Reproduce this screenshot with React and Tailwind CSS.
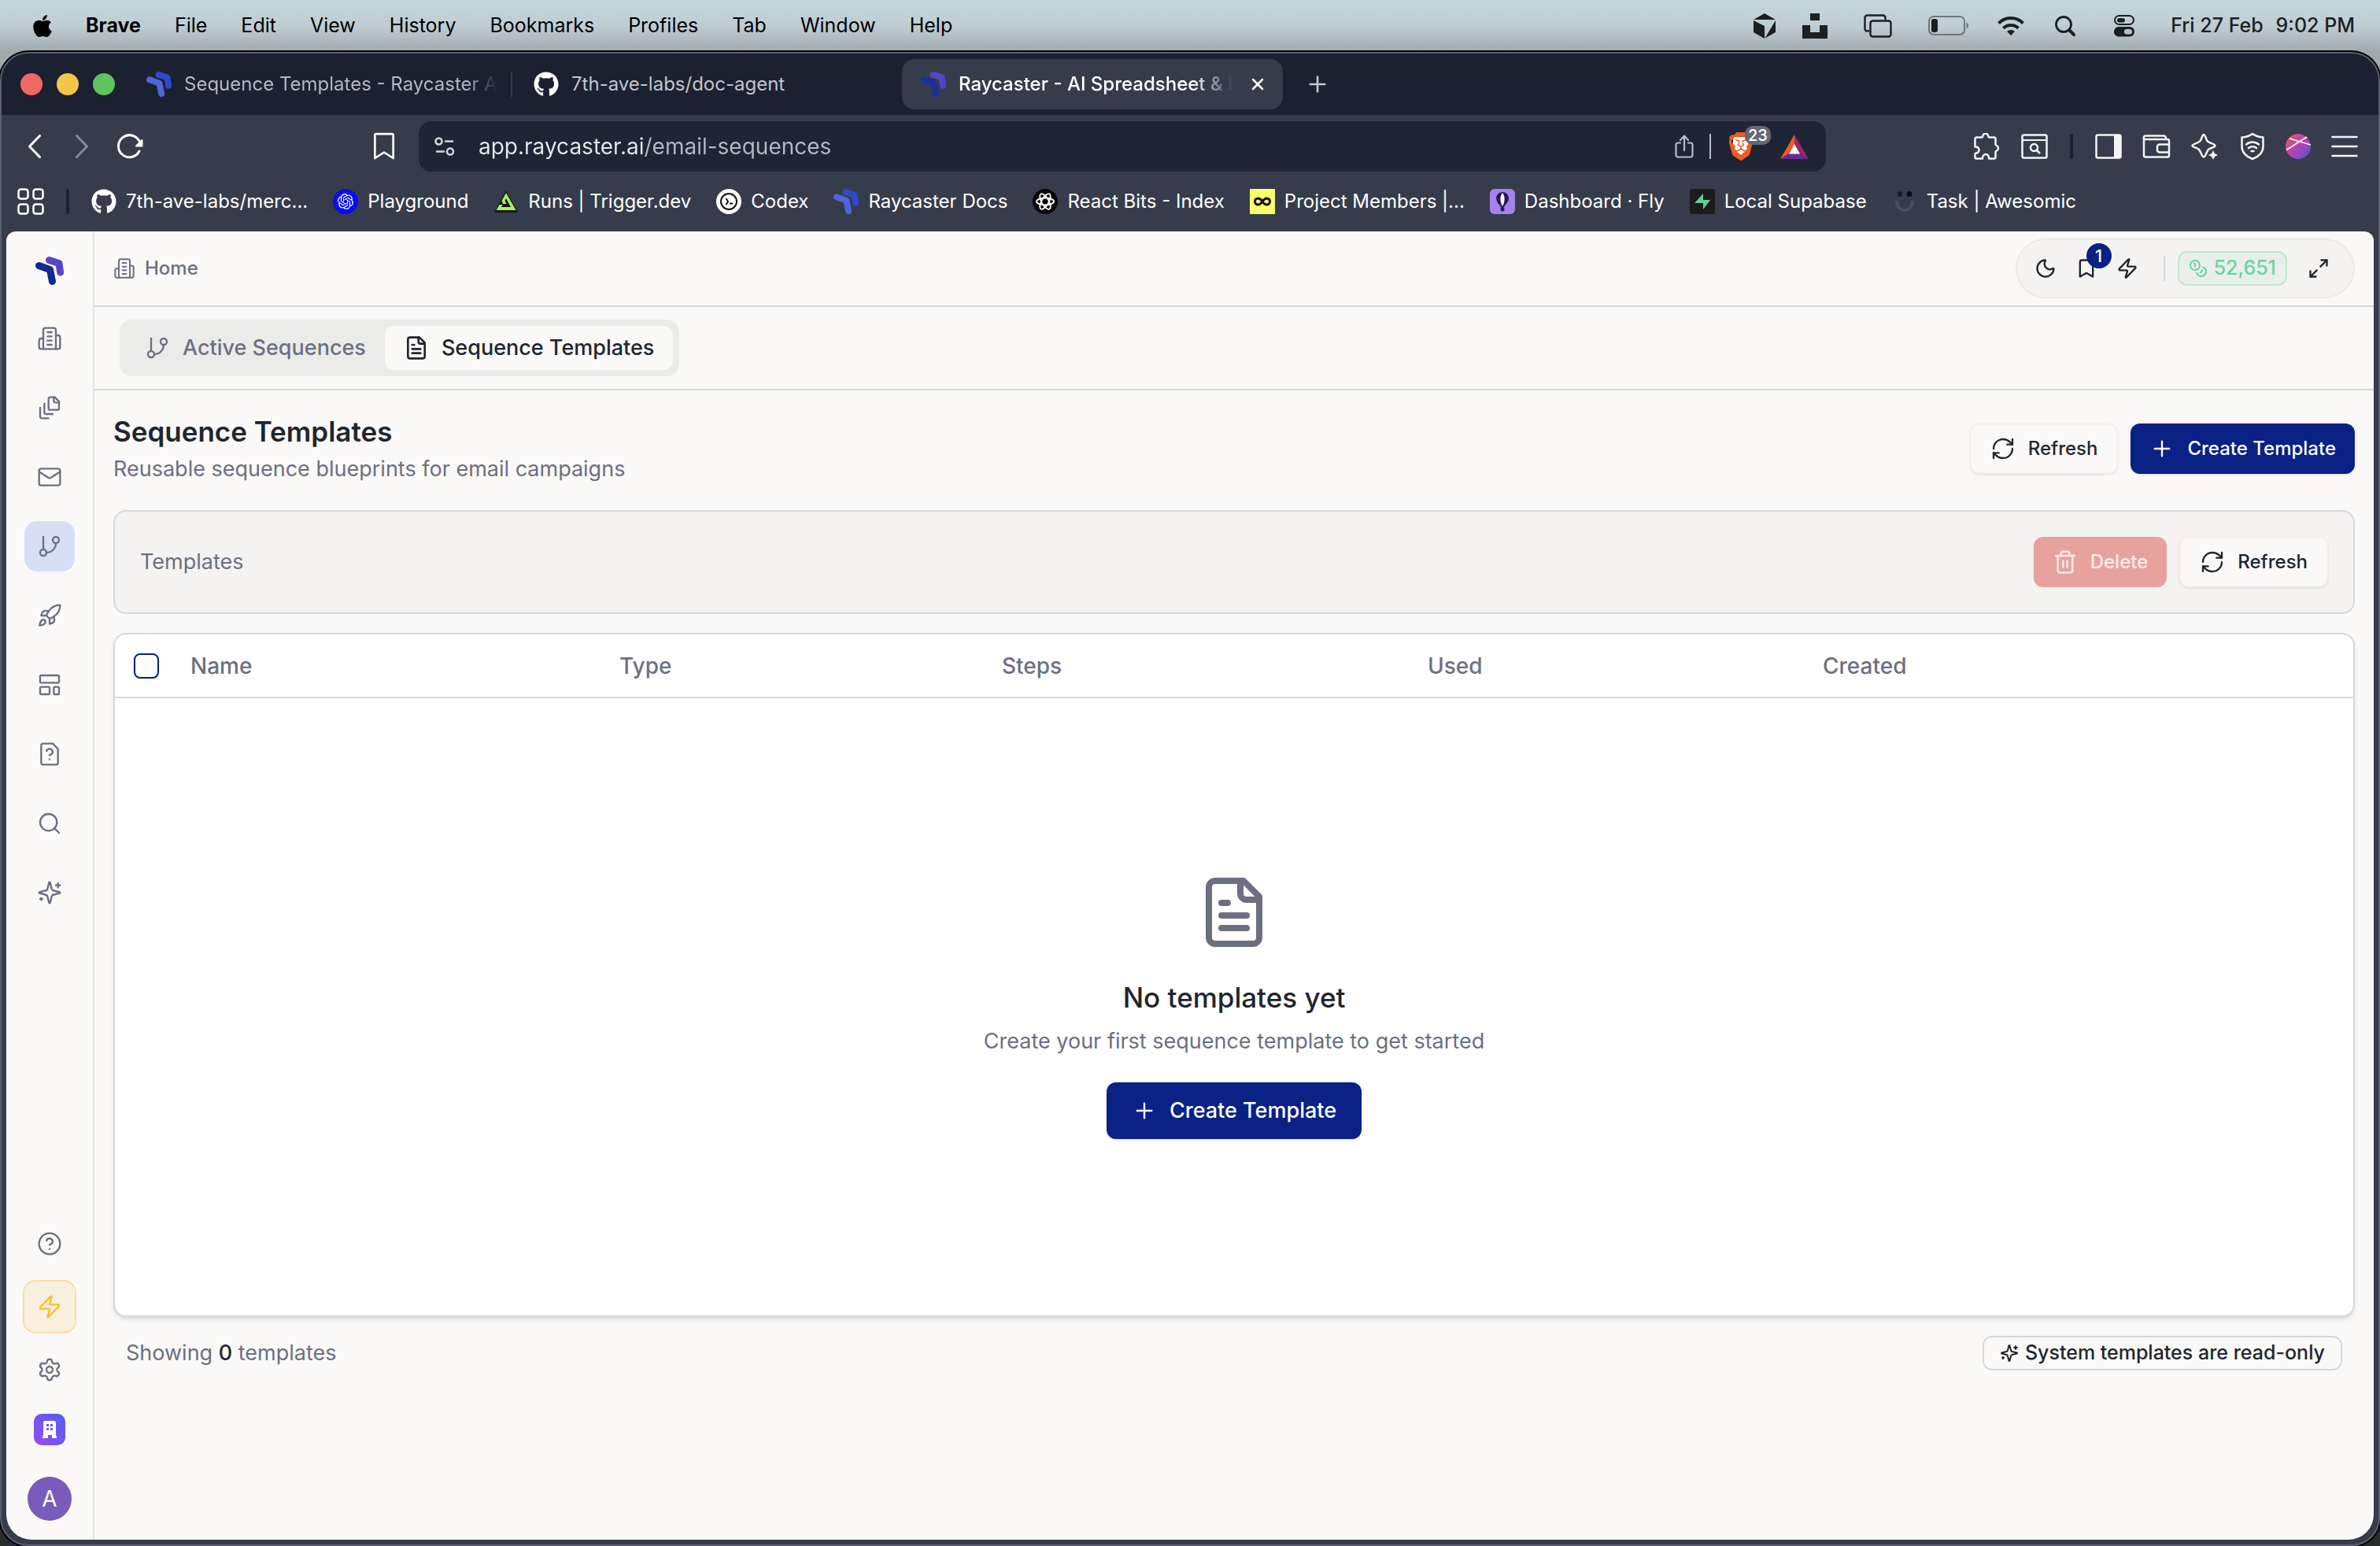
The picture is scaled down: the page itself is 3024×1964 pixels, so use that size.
import {
  Bookmark,
  Coins,
  LayoutTemplate,
  Maximize2,
  Moon,
  Plus,
  RefreshCw,
  Rocket,
  Search,
  Settings,
  Trash2,
  X,
  Zap,
} from "lucide-react";
import { FaApple, FaGithub } from "react-icons/fa";
import { SiBrave, SiOpenai } from "react-icons/si";

// 24x24 outline icon, same drawing rules as lucide
function Outline({ className, strokeWidth = 2, children }) {
  return (
    <svg
      viewBox="0 0 24 24"
      fill="none"
      stroke="currentColor"
      strokeWidth={strokeWidth}
      strokeLinecap="round"
      strokeLinejoin="round"
      className={className}
      aria-hidden="true"
    >
      {children}
    </svg>
  );
}

const BuildingIcon = (props) => (
  <Outline {...props}>
    <path d="M6 22V4a2 2 0 0 1 2-2h8a2 2 0 0 1 2 2v18Z" />
    <path d="M6 12H4a2 2 0 0 0-2 2v6a2 2 0 0 0 2 2h2" />
    <path d="M18 9h2a2 2 0 0 1 2 2v9a2 2 0 0 1-2 2h-2" />
    <path d="M10 6h4M10 10h4M10 14h4M10 18h4" />
  </Outline>
);

const FileStackIcon = (props) => (
  <Outline {...props}>
    <path d="M21 7h-3a2 2 0 0 1-2-2V2" />
    <path d="M21 6v6.5c0 .8-.7 1.5-1.5 1.5h-7c-.8 0-1.5-.7-1.5-1.5v-9c0-.8.7-1.5 1.5-1.5H17Z" />
    <path d="M7 8v8.8c0 .3.2.6.4.8.2.2.5.4.8.4H15" />
    <path d="M3 12v8.8c0 .3.2.6.4.8.2.2.5.4.8.4H11" />
  </Outline>
);

const MailIcon = (props) => (
  <Outline {...props}>
    <rect width="20" height="16" x="2" y="4" rx="2" />
    <path d="m22 7-8.97 5.7a1.94 1.94 0 0 1-2.06 0L2 7" />
  </Outline>
);

const BranchIcon = (props) => (
  <Outline {...props}>
    <path d="M6 3v12" />
    <circle cx="18" cy="6" r="3" />
    <circle cx="6" cy="18" r="3" />
    <path d="M18 9a9 9 0 0 1-9 9" />
  </Outline>
);

const FileQuestionIcon = (props) => (
  <Outline {...props}>
    <path d="M12 17h.01" />
    <path d="M15 2H6a2 2 0 0 0-2 2v16a2 2 0 0 0 2 2h12a2 2 0 0 0 2-2V7z" />
    <path d="M9.1 9a3 3 0 0 1 5.82 1c0 2-3 3-3 3" />
  </Outline>
);

const FileTextIcon = (props) => (
  <Outline {...props}>
    <path d="M15 2H6a2 2 0 0 0-2 2v16a2 2 0 0 0 2 2h12a2 2 0 0 0 2-2V7Z" />
    <path d="M14 2v4a2 2 0 0 0 2 2h4" />
    <path d="M10 9H8M16 13H8M16 17H8" />
  </Outline>
);

const SparklesIcon = (props) => (
  <Outline {...props}>
    <path d="M9.937 15.5A2 2 0 0 0 8.5 14.063l-6.135-1.582a.5.5 0 0 1 0-.962L8.5 9.936A2 2 0 0 0 9.937 8.5l1.582-6.135a.5.5 0 0 1 .963 0L14.063 8.5A2 2 0 0 0 15.5 9.937l6.135 1.581a.5.5 0 0 1 0 .964L15.5 14.063a2 2 0 0 0-1.437 1.437l-1.582 6.135a.5.5 0 0 1-.963 0z" />
    <path d="M20 3v4M22 5h-4M4 17v2M5 18H3" />
  </Outline>
);

const HelpIcon = (props) => (
  <Outline {...props}>
    <circle cx="12" cy="12" r="10" />
    <path d="M9.09 9a3 3 0 0 1 5.83 1c0 2-3 3-3 3M12 17h.01" />
  </Outline>
);

const logoTones = {
  page: { back: "#5446c8", gap: "#faf9f7", front: "#14298f" },
  tab: { back: "#5446c8", gap: "#363c4b", front: "#1a2f9c" },
  tabDim: { back: "#3048cc", gap: "#1b2130", front: "#4d66d8" },
  bar: { back: "#3048cc", gap: "#363c4b", front: "#4d66d8" },
};

function RaycasterLogo({ className, tone = "page" }) {
  const { back, gap, front } = logoTones[tone];
  return (
    <svg viewBox="0 0 36 36" fill="none" strokeWidth="9" strokeLinecap="round" strokeLinejoin="round" className={className} aria-hidden="true">
      <path d="M17.5 4.5 30 8.5l1.6 11.5" stroke={back} />
      <path d="m4.5 11.5 14 5 3 15" stroke={gap} strokeWidth="12" />
      <path d="m4.5 11.5 14 5 3 15" stroke={front} />
    </svg>
  );
}

/* ---------- macOS menu bar ---------- */

const menus = ["File", "Edit", "View", "History", "Bookmarks", "Profiles", "Tab", "Window", "Help"];

function MenuBar() {
  return (
    <header className="flex h-[66px] items-center justify-between bg-linear-to-b from-[#c6d5dc] via-[#bfcdd3] to-[#a0aaad] pr-8 pl-[42px] text-[25px] text-black">
      <div className="flex items-center gap-[43px]">
        <FaApple className="h-8 w-6" />
        <button className="font-bold">Brave</button>
        {menus.map((menu) => (
          <button key={menu}>{menu}</button>
        ))}
      </div>
      <div className="flex items-center gap-[46px] text-[#1c1f20]">
        <div className="flex items-center gap-[34px]">
          <svg viewBox="0 0 28 32" className="h-8 w-7" fill="currentColor" aria-hidden="true">
            <path d="M14 0 28 8H0Z" />
            <path d="M0 9l14 7v16L0 24Z" />
            <path d="M28 9v15L14.500 31.500Z" />
          </svg>
          <svg viewBox="0 0 32 32" className="size-8" fill="currentColor" aria-hidden="true">
            <path d="M10 0h12v9H10zM0 15h10v9h12v-9h10v17H0z" />
          </svg>
        </div>
        <svg viewBox="0 0 36 30" className="h-[30px] w-9" fill="none" stroke="currentColor" strokeWidth="2.400" aria-hidden="true">
          <path d="M7 21.500H4.500a3 3 0 0 1-3-3v-14a3 3 0 0 1 3-3h20a3 3 0 0 1 3 3V7" />
          <rect x="8.500" y="8.500" width="26" height="20" rx="3" />
        </svg>
        <div className="flex items-center gap-9">
          <svg viewBox="0 0 52 26" className="h-[26px] w-[52px]" aria-hidden="true">
            <rect x="1" y="1" width="45" height="23" rx="6" fill="none" stroke="#6d777b" strokeWidth="2" />
            <rect x="4" y="4" width="8" height="17" rx="3" fill="currentColor" />
            <path d="M48.500 8.500c3.500 1.500 3.500 6.500 0 8z" fill="#6d777b" />
          </svg>
          <svg viewBox="0 0 34 26" className="h-[26px] w-[34px]" fill="none" stroke="currentColor" strokeWidth="4" aria-hidden="true">
            <path d="M1.500 9.500a22 22 0 0 1 31 0M7.500 15.800a13.500 13.500 0 0 1 19 0" />
            <path d="m17 25-5-5a7 7 0 0 1 10 0z" fill="currentColor" stroke="none" />
          </svg>
          <svg viewBox="0 0 32 32" className="size-8" fill="none" stroke="currentColor" strokeLinecap="round" aria-hidden="true">
            <circle cx="14" cy="14" r="9.500" strokeWidth="2.800" />
            <path d="m21.500 21.500 5.500 5.500" strokeWidth="4" />
          </svg>
        </div>
        <svg viewBox="0 0 26 28" className="h-7 w-[26px]" aria-hidden="true">
          <rect x="1" y="1" width="24" height="11" rx="5.500" fill="none" stroke="currentColor" strokeWidth="2" />
          <rect x="4" y="4" width="10" height="5.500" rx="2.750" fill="currentColor" />
          <rect x="0" y="15" width="26" height="12.500" rx="6" fill="currentColor" />
          <rect x="13" y="18" width="10" height="6.500" rx="3.200" fill="#b5c2c7" />
        </svg>
        <span className="flex gap-4 font-medium">
          <span>Fri 27 Feb</span>
          <span>9:02 PM</span>
        </span>
      </div>
    </header>
  );
}

/* ---------- browser chrome ---------- */

function TabStrip() {
  return (
    <div className="flex h-[78px] items-center bg-[#1b2130] pl-6 text-[24px]">
      <div className="flex w-[136px] shrink-0 gap-[18px]">
        <button aria-label="Close window" className="size-7 rounded-full bg-[#ed6a62]" />
        <button aria-label="Minimise window" className="size-7 rounded-full bg-[#f5c646]" />
        <button aria-label="Zoom window" className="size-7 rounded-full bg-[#5fc361]" />
      </div>
      <div className="flex items-center gap-1">
        <div className="flex h-16 w-[484px] items-center gap-4 pr-5 pl-6 text-[#b5b8bf]">
          <RaycasterLogo tone="tabDim" className="size-8 shrink-0" />
          <span className="mask-r-from-90% whitespace-nowrap">Sequence Templates - Raycaster A</span>
        </div>
        <span className="-mx-px h-8 w-0.5 bg-[#363b49]" />
        <div className="flex h-16 w-[484px] items-center gap-4 px-6 text-[#c3c5ca]">
          <FaGithub className="size-8 shrink-0 text-white" />
          <span>7th-ave-labs/doc-agent</span>
        </div>
        <div className="ml-1 flex h-16 w-[484px] items-center gap-4 rounded-2xl bg-[#363c4b] pr-5 pl-6 text-white">
          <RaycasterLogo tone="tab" className="size-8 shrink-0" />
          <span className="mask-r-from-85% font-medium whitespace-nowrap">Raycaster - AI Spreadsheet &amp; I</span>
          <button aria-label="Close tab" className="ml-auto">
            <X className="size-6" strokeWidth={2.5} />
          </button>
        </div>
        <button aria-label="New tab" className="ml-6 text-[#c3c5ca]">
          <Plus className="size-8" strokeWidth={2} />
        </button>
      </div>
    </div>
  );
}

function Toolbar() {
  return (
    <div className="flex h-20 items-center bg-[#363c4b] pr-[26px] pl-[34px] text-white">
      <div className="flex w-[472px] shrink-0 items-center gap-9">
        <div className="flex items-center gap-11">
          <button aria-label="Back">
            <svg viewBox="0 0 16 30" className="h-[30px] w-4" fill="none" stroke="currentColor" strokeWidth="3" strokeLinecap="round" strokeLinejoin="round" aria-hidden="true">
              <path d="M14.500 1.500 1.500 15l13 13.500" />
            </svg>
          </button>
          <button aria-label="Forward" className="text-[#858a95]">
            <svg viewBox="0 0 16 30" className="h-[30px] w-4" fill="none" stroke="currentColor" strokeWidth="3" strokeLinecap="round" strokeLinejoin="round" aria-hidden="true">
              <path d="m1.500 1.500 13 13.500-13 13.500" />
            </svg>
          </button>
        </div>
        <button aria-label="Reload">
          <svg viewBox="0 0 34 32" className="h-8 w-[34px]" fill="none" stroke="currentColor" strokeWidth="3" strokeLinecap="round" aria-hidden="true">
            <path d="M30 12A14 14 0 1 0 29 22" />
            <path d="M32.500 8v7.500H25Z" fill="currentColor" strokeWidth="2" strokeLinejoin="round" />
          </svg>
        </button>
        <button aria-label="Bookmark this tab" className="ml-auto">
          <Outline className="size-10" strokeWidth={1.6}>
            <path d="M5 3.500a1 1 0 0 1 1-1h12a1 1 0 0 1 1 1V21l-7-4.500L5 21Z" />
          </Outline>
        </button>
      </div>
      <div className="ml-6 flex h-16 min-w-0 flex-1 items-center gap-6 rounded-2xl bg-[#202535] pr-[22px] pl-5">
        <svg viewBox="0 0 26 24" className="h-6 w-[26px] shrink-0 text-[#d5d7db]" fill="none" stroke="currentColor" strokeWidth="2.500" strokeLinecap="round" aria-hidden="true">
          <circle cx="5.500" cy="5.500" r="4" />
          <path d="M14 5.500h9M3 18.500h9" />
          <circle cx="20" cy="18.500" r="4" />
        </svg>
        <input
          aria-label="Address"
          readOnly
          className="ml-1.5 min-w-0 flex-1 bg-[linear-gradient(90deg,#e6e8eb_211px,#b6b9c1_211px)] bg-clip-text text-[28px] text-transparent outline-none"
          value="app.raycaster.ai/email-sequences"
        />
        <svg viewBox="0 0 24 30" className="h-[30px] w-6 text-[#bbbcc6]" fill="none" stroke="currentColor" strokeWidth="2.200" strokeLinecap="round" strokeLinejoin="round" aria-hidden="true">
          <path d="M7 10.500H4a2.500 2.500 0 0 0-2.500 2.500v13A2.500 2.500 0 0 0 4 28.500h16a2.500 2.500 0 0 0 2.500-2.500V13a2.500 2.500 0 0 0-2.500-2.500h-3M12 20V2M7 7l5-5.500L17 7" />
        </svg>
        <span className="-ml-1 h-8 w-0.5 bg-[#bbbcc6]" />
        <button aria-label="Brave Shields" className="relative -ml-1">
          <SiBrave className="size-9 bg-[linear-gradient(white,white)] bg-size-[20px_24px] bg-center bg-no-repeat text-[#f15a22]" />
          <span className="absolute -top-2 left-[23px] rounded-[10px] bg-[#646876] px-1 text-[20px]/6 font-medium">23</span>
        </button>
        <svg viewBox="0 0 36 31" className="ml-2 h-[31px] w-9" aria-hidden="true">
          <path d="M18 0 0 31l11-7 7-12z" fill="#f1592b" />
          <path d="m18 0 18 31-11-7-7-12z" fill="#982864" />
          <path d="M0 31h36l-11-7H11z" fill="#662d91" />
          <path d="m18 12 7 12.500H11z" fill="#fff" />
        </svg>
      </div>
      <div className="flex w-[676px] shrink-0 items-center justify-end gap-[26px] text-[#f3f4f6]">
        <svg viewBox="0 0 34 34" className="h-[34px] w-9" fill="none" stroke="currentColor" strokeWidth="2.500" strokeLinejoin="round" aria-hidden="true">
          <path d="M4 5.500h7c1.500 0 1-1.500 1.500-2.500a3.500 3.500 0 0 1 6.500 0c.5 1 0 2.500 1.500 2.500h6a2 2 0 0 1 2 2v7c0 1.500 1.200 1.200 2.200 2a3.500 3.500 0 0 1 0 5.500c-1 .8-2.200.5-2.200 2v6.500a2 2 0 0 1-2 2h-6.500c.5-3-1.500-5.500-4-5.500s-4.500 2.500-4 5.500H4.500a2 2 0 0 1-2-2V26c3-.5 5-2 5-4.500s-2-4-5-4V7.500a2 2 0 0 1 1.500-2Z" />
        </svg>
        <svg viewBox="0 0 34 32" className="h-8 w-[34px]" fill="none" stroke="currentColor" strokeWidth="2.500" aria-hidden="true">
          <rect x="1.500" y="1.500" width="31" height="29" rx="2" />
          <path d="M2 8h30" strokeWidth="2" />
          <circle cx="16.500" cy="17.500" r="4.500" />
          <path d="m20 21 4 4" />
        </svg>
        <span className="mx-0.5 h-8 w-1 rounded-full bg-[#1b2130]" />
        <svg viewBox="0 0 34 32" className="h-8 w-[34px]" fill="none" stroke="currentColor" strokeWidth="2.500" aria-hidden="true">
          <rect x="1.500" y="1.500" width="31" height="29" rx="2" />
          <path d="M24 2h8v28h-8z" fill="currentColor" stroke="none" />
        </svg>
        <svg viewBox="0 0 36 32" className="h-8 w-9" fill="none" stroke="currentColor" strokeWidth="2.500" strokeLinejoin="round" aria-hidden="true">
          <path d="M2 4v23.500A2 2 0 0 0 4 29.500h28a2 2 0 0 0 2-2V9a2 2 0 0 0-2-2H4a2 2 0 0 1-2-3 2 2 0 0 1 2-1.500h23a3 3 0 0 1 3 3V7" />
          <path d="M34 13.500H22a3 3 0 0 0-3 3v4a3 3 0 0 0 3 3h12" />
        </svg>
        <svg viewBox="0 0 36 34" className="h-[34px] w-9" fill="none" stroke="currentColor" strokeWidth="2.500" strokeLinejoin="round" aria-hidden="true">
          <path d="M16 2c2 0 2.500 5 4.500 8s10 3.500 10 6-6 2.500-8.500 5-3.500 9.500-6 9.500-3.500-7-6-9.500S1.500 18 1.500 16s7.500-3 10-6S14 2 16 2Z" />
          <path d="m28 22 2 4 4 2-4 2-2 4-2-4-4-2 4-2z" fill="currentColor" stroke="none" />
        </svg>
        <svg viewBox="0 0 32 36" className="h-9 w-8" fill="none" stroke="currentColor" strokeWidth="2.500" strokeLinecap="round" strokeLinejoin="round" aria-hidden="true">
          <path d="M16 2c4 3 8 4 13.500 4.500V18c0 8-5 12.500-13.500 16C7.500 30.500 2.500 26 2.500 18V6.500C8 6 12 5 16 2Z" />
          <path d="M8 15.500c4.500-4 11.500-4 16 0M11 20c3-2.500 7-2.500 10 0M14.500 24h3" />
        </svg>
        <svg viewBox="0 0 32 32" className="size-8" aria-hidden="true">
          <defs>
            <linearGradient id="ball" x1="0" y1="0" x2="1" y2="1">
              <stop offset="0" stopColor="#ea5a4f" />
              <stop offset=".5" stopColor="#b940b8" />
              <stop offset="1" stopColor="#3a5be0" />
            </linearGradient>
          </defs>
          <circle cx="16" cy="16" r="16" fill="url(#ball)" />
          <path d="m5 6 27 8M27 4 1 20.500" stroke="#fff" strokeWidth="1.500" />
        </svg>
        <svg viewBox="0 0 34 28" className="h-7 w-[34px]" stroke="currentColor" strokeWidth="2.500" strokeLinecap="round" aria-hidden="true">
          <path d="M1.500 2h31M1.500 14h31M1.500 26h31" />
        </svg>
      </div>
    </div>
  );
}

const bookmarks = [
  { label: "7th-ave-labs/merc...", icon: <FaGithub className="size-8" /> },
  {
    label: "Playground",
    icon: (
      <span className="flex size-8 items-center justify-center rounded-full bg-[#0a0af5]">
        <SiOpenai className="size-5" />
      </span>
    ),
  },
  {
    label: "Runs | Trigger.dev",
    icon: (
      <svg viewBox="0 0 32 32" className="size-8" aria-hidden="true">
        <path d="M16 2 31 30H1z" fill="#15171d" />
        <path d="m16 5 12.500 22h-25l4-7h4l-1.500 3h12L16 12l-1.500 3 2 4h-4.500l-1.500-4z" fill="#a3f25a" />
      </svg>
    ),
  },
  {
    label: "Codex",
    icon: (
      <svg viewBox="0 0 32 32" className="size-8" fill="none" stroke="#111" strokeWidth="2" aria-hidden="true">
        <circle cx="16" cy="16" r="16" fill="#fff" stroke="none" />
        <circle cx="16" cy="16" r="10" />
        <path d="m12.500 12 2.500 4-2.500 4M17 18.500h4" />
      </svg>
    ),
  },
  { label: "Raycaster Docs", icon: <RaycasterLogo tone="bar" className="size-8" /> },
  {
    label: "React Bits - Index",
    icon: (
      <svg viewBox="0 0 32 32" className="size-8" fill="none" stroke="#fff" strokeWidth="1.800" aria-hidden="true">
        <circle cx="16" cy="16" r="16" fill="#060606" stroke="none" />
        <ellipse cx="16" cy="16" rx="11" ry="4.500" />
        <ellipse cx="16" cy="16" rx="11" ry="4.500" transform="rotate(60 16 16)" />
        <ellipse cx="16" cy="16" rx="11" ry="4.500" transform="rotate(120 16 16)" />
      </svg>
    ),
  },
  {
    label: "Project Members |...",
    icon: (
      <svg viewBox="0 0 32 32" className="size-8" fill="none" stroke="#111" strokeWidth="3" aria-hidden="true">
        <path d="M0 0h32v32H0z" fill="#faff69" stroke="none" />
        <path d="M16 16c-2-3-3.500-4-5.500-4a4 4 0 0 0 0 8c2 0 3.500-1 5.500-4s3.500-4 5.500-4a4 4 0 0 1 0 8c-2 0-3.500-1-5.500-4Z" />
      </svg>
    ),
  },
  {
    label: "Dashboard · Fly",
    icon: (
      <svg viewBox="0 0 32 32" className="size-8" aria-hidden="true">
        <rect width="32" height="32" rx="6" fill="#a582ea" />
        <path d="M16 4a8 8 0 0 1 8 8c0 5-5 8-6.500 12h-3C13 20 8 17 8 12a8 8 0 0 1 8-8Z" fill="#24175b" />
        <path d="M16 5c4 5 3 12 0 17-3-5-4-12 0-17Z" fill="#fff" />
        <circle cx="16" cy="26" r="2.500" fill="#24175b" />
      </svg>
    ),
  },
  {
    label: "Local Supabase",
    icon: (
      <svg viewBox="0 0 32 32" className="size-8" aria-hidden="true">
        <rect width="32" height="32" rx="3" fill="#1c1c1c" />
        <path d="M17 6v8h9L17 26v-8H6Z" fill="#5fd08f" />
      </svg>
    ),
  },
  {
    label: "Task | Awesomic",
    icon: (
      <svg viewBox="0 0 32 32" className="size-8" aria-hidden="true">
        <path d="M10 3v7M7 4.500l6 4M13 4.500l-6 4" stroke="#0c0d10" strokeWidth="1.500" />
        <circle cx="22" cy="6.500" r="3.500" fill="#0c0d10" />
        <path d="M6 15c0 16 20 16 20 0" fill="none" stroke="#4b4f5a" strokeWidth="4" />
      </svg>
    ),
  },
];

function BookmarksBar() {
  return (
    <nav aria-label="Bookmarks" className="flex h-[68px] items-center gap-7 bg-[#363c4b] pb-2 pl-5 text-white">
      <button aria-label="All bookmarks">
        <svg viewBox="0 0 34 34" className="size-[34px]" fill="none" stroke="currentColor" strokeWidth="2.500" aria-hidden="true">
          <rect x="1.500" y="1.500" width="12" height="12" rx="3" />
          <rect x="20.500" y="1.500" width="12" height="12" rx="3" />
          <rect x="1.500" y="20.500" width="12" height="12" rx="3" />
          <rect x="20.500" y="20.500" width="12" height="12" rx="3" />
        </svg>
      </button>
      <span className="h-8 w-1 rounded-full bg-[#1b2130]" />
      <div className="flex items-center gap-8">
        {bookmarks.map((bookmark) => (
          <a key={bookmark.label} href="#" className="flex items-center gap-3 text-[24px] whitespace-nowrap">
            {bookmark.icon}
            {bookmark.label}
          </a>
        ))}
      </div>
    </nav>
  );
}

/* ---------- app ---------- */

const navItems = [
  { label: "Accounts", Icon: BuildingIcon },
  { label: "Documents", Icon: FileStackIcon },
  { label: "Mail", Icon: MailIcon },
  { label: "Sequences", Icon: BranchIcon, active: true },
  { label: "Launch", Icon: Rocket },
  { label: "Layouts", Icon: LayoutTemplate },
  { label: "Requests", Icon: FileQuestionIcon },
  { label: "Search", Icon: Search },
  { label: "Assistant", Icon: SparklesIcon },
];

function Sidebar() {
  return (
    <aside className="flex w-28 shrink-0 flex-col items-center justify-between border-r-2 border-[#e2e4e8] pt-8 pb-6 text-[#6b7080]">
      <div className="flex flex-col items-center">
        <RaycasterLogo className="size-9" />
        <nav className="mt-9 flex flex-col gap-6">
          {navItems.map(({ label, Icon, active }) => (
            <a
              key={label}
              href="#"
              aria-label={label}
              className={`flex size-16 items-center justify-center rounded-2xl ${active ? "bg-[#d7def5]" : ""}`}
            >
              <Icon className="size-8" strokeWidth={1.75} />
            </a>
          ))}
        </nav>
      </div>
      <div className="flex flex-col items-center">
        <button aria-label="Help" className="mb-[30px]">
          <HelpIcon className="size-8" strokeWidth={1.75} />
        </button>
        <button aria-label="Upgrade" className="flex size-[68px] items-center justify-center rounded-2xl border-2 border-[#f8dfa0] bg-[#f8efdf] text-[#fbbf24]">
          <Zap className="size-8" strokeWidth={1.75} />
        </button>
        <button aria-label="Settings" className="mt-[30px] mb-10">
          <Settings className="size-8" strokeWidth={1.75} />
        </button>
        <button aria-label="Workspace" className="flex size-10 items-center justify-center rounded-[10px] bg-linear-to-tr from-[#9a46f0] to-[#4a5cf8] text-white">
          <svg viewBox="0 0 18 22" className="h-[22px] w-[18px]" fill="currentColor" fillRule="evenodd" aria-hidden="true">
            <path d="M3 0h12a2 2 0 0 1 2 2v17h1v3h-6v-4H7v4H0v-3h1V2a2 2 0 0 1 2-2Zm2 4v3h3V4Zm5 0v3h3V4ZM5 9v3h3V9Zm5 0v3h3V9Z" />
          </svg>
        </button>
        <button aria-label="Account" className="mt-10 flex size-14 items-center justify-center rounded-full bg-[#7a5abb] text-[28px] text-white">
          A
        </button>
      </div>
    </aside>
  );
}

function TopBar() {
  return (
    <div className="flex h-24 items-center justify-between border-b-2 border-[#d6d8dd] px-6">
      <a href="#" className="flex items-center gap-3 text-[24px] font-medium text-[#6b7080]">
        <BuildingIcon className="size-7" strokeWidth={1.75} />
        Home
      </a>
      <div className="flex h-[76px] items-center rounded-full border-2 border-[#ebeae8] bg-[#f4f3f1] pr-[30px] pl-[22px] text-[#21252d]">
        <button aria-label="Dark mode">
          <Moon className="size-7" />
        </button>
        <button aria-label="Bookmarks" className="relative ml-6">
          <Bookmark className="size-7" />
          <span className="absolute -top-[18px] left-3.5 flex size-8 items-center justify-center rounded-full bg-[#0a2185] text-[22px] font-medium text-white">1</span>
        </button>
        <button aria-label="Activity" className="ml-6">
          <Zap className="size-7" />
        </button>
        <span className="mr-4 ml-8 h-8 w-0.5 bg-[#d6d8dd]" />
        <button className="flex h-11 items-center gap-2 rounded-xl border-2 border-[#c0e6d2] bg-[#e7efe8] px-3 text-[25px] font-medium text-[#6dd3a0]">
          <Coins className="size-6" />
          52,651
        </button>
        <button aria-label="Expand" className="ml-[26px]">
          <Maximize2 className="size-7" />
        </button>
      </div>
    </div>
  );
}

function RefreshButton() {
  return (
    <button className="flex h-16 items-center gap-4 rounded-xl border-2 border-[#f4f3f1] bg-[#faf9f7] px-6 text-[24px] font-medium text-[#21252d] shadow-sm">
      <RefreshCw className="size-8" strokeWidth={1.75} />
      Refresh
    </button>
  );
}

const columns = [
  { label: "Name", width: "w-[545px]" },
  { label: "Type", width: "w-[486px]" },
  { label: "Steps", width: "w-[541px]" },
  { label: "Used", width: "w-[502px]" },
  { label: "Created", width: "" },
];

function TemplatesPage() {
  return (
    <main className="flex flex-col px-6 pt-7 text-[27px] text-[#6b7080]">
      <div className="flex items-center justify-between">
        <div>
          <h1 className="text-[35px]/12 font-semibold text-[#21252d]">Sequence Templates</h1>
          <p className="mt-1 leading-10">Reusable sequence blueprints for email campaigns</p>
        </div>
        <div className="flex gap-4">
          <RefreshButton />
          <button className="flex h-16 items-center gap-4 rounded-xl bg-[#0a2185] px-6 text-[24px] font-medium text-white shadow-sm">
            <Plus className="size-8" strokeWidth={1.75} />
            Create Template
          </button>
        </div>
      </div>

      <div className="mt-8 flex h-[132px] items-center justify-between rounded-2xl border-2 border-[#d6d8dd] bg-[#f4f3f1] px-8">
        <span>Templates</span>
        <div className="flex gap-4">
          <button disabled className="flex h-16 items-center gap-4 rounded-xl bg-[#e8a29e] px-6 text-[24px] font-medium text-[#fbeeed]">
            <Trash2 className="size-8" strokeWidth={1.75} />
            Delete
          </button>
          <RefreshButton />
        </div>
      </div>

      <section className="mt-6 overflow-hidden rounded-2xl border-2 border-[#d6d8dd] bg-white shadow-md">
        <table className="w-full table-fixed text-left text-[28px]">
          <thead>
            <tr className="h-20 border-b-2 border-[#d6d8dd]">
              <th className="w-20 pl-6">
                <input
                  type="checkbox"
                  aria-label="Select all templates"
                  className="block size-8 appearance-none rounded-lg border-2 border-[#0a2185] bg-white shadow-sm"
                />
              </th>
              {columns.map((column) => (
                <th key={column.label} className={`px-4 font-medium ${column.width}`}>
                  {column.label}
                </th>
              ))}
            </tr>
          </thead>
        </table>
        <div className="flex flex-col items-center py-56">
          <FileTextIcon className="size-24" />
          <h2 className="mt-9 text-[35px]/12 font-medium text-[#21252d]">No templates yet</h2>
          <p className="mt-3 leading-10">Create your first sequence template to get started</p>
          <button className="mt-8 flex h-[72px] items-center gap-4 rounded-xl bg-[#0a2185] px-8 font-medium text-white shadow-sm">
            <Plus className="size-8" strokeWidth={1.75} />
            Create Template
          </button>
        </div>
      </section>

      <div className="mt-6 flex items-center justify-between px-4">
        <p>
          Showing <span className="font-medium text-[#21252d]">0</span> templates
        </p>
        <span className="flex h-11 items-center gap-2 rounded-xl border-2 border-[#d6d8dd] px-5 text-[25px] font-medium text-[#21252d]">
          <SparklesIcon className="size-6" />
          System templates are read-only
        </span>
      </div>
    </main>
  );
}

function SequenceTabs() {
  return (
    <div className="flex h-[106px] items-center border-b-2 border-[#d6d8dd] px-8">
      <div role="tablist" className="flex h-[72px] items-center rounded-2xl bg-[#ebebe9] p-2 text-[27px] font-medium">
        <button role="tab" aria-selected="false" className="flex h-14 items-center gap-4 px-6 text-[#6b7080]">
          <BranchIcon className="size-8" strokeWidth={1.75} />
          Active Sequences
        </button>
        <button role="tab" aria-selected="true" className="flex h-14 items-center gap-4 rounded-xl bg-[#faf9f7] px-6 text-[#21252d]">
          <FileTextIcon className="size-8" strokeWidth={2} />
          Sequence Templates
        </button>
      </div>
    </div>
  );
}

function App() {
  return (
    <div className="flex min-h-screen flex-col bg-linear-to-b from-[#a0aaad] from-10% to-[#2a2b2b] to-40% font-['Inter',sans-serif]">
      <MenuBar />
      <div className="flex flex-1 flex-col overflow-hidden rounded-[36px] border-2 border-[#5b6070] bg-[#363c4b] shadow-[0_0_0_2px_#000]">
        <TabStrip />
        <Toolbar />
        <BookmarksBar />
        <div className="mx-1.5 mb-1.5 flex flex-1 overflow-hidden rounded-t-xl rounded-b-[32px] bg-[#faf9f7]">
          <Sidebar />
          <div className="min-w-0 flex-1">
            <TopBar />
            <SequenceTabs />
            <TemplatesPage />
          </div>
        </div>
      </div>
    </div>
  );
}

export default App;
